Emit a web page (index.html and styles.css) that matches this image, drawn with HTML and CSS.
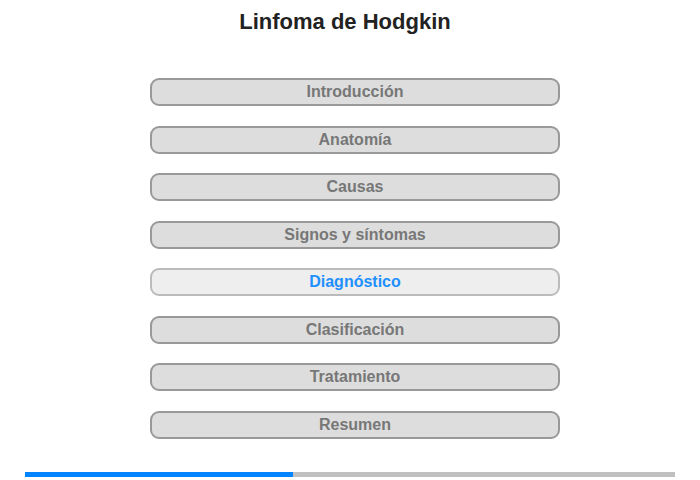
FILE: index.html
```html
<!DOCTYPE html>
<html lang="es">
<head>
<meta charset="utf-8">
<title>Linfoma de Hodgkin</title>
<link rel="stylesheet" href="styles.css">
</head>
<body>
<div class="page">
  <h1 class="title">Linfoma de Hodgkin</h1>
  <nav class="menu">
    <div class="item">Introducción</div>
    <div class="item">Anatomía</div>
    <div class="item">Causas</div>
    <div class="item">Signos y síntomas</div>
    <div class="item active">Diagnóstico</div>
    <div class="item">Clasificación</div>
    <div class="item">Tratamiento</div>
    <div class="item">Resumen</div>
  </nav>
  <div class="progress"><div class="progress-fill" style="width: 268px"></div></div>
</div>
</body>
</html>
```
FILE: styles.css
```css
html, body {
  margin: 0;
  padding: 0;
  background: #fff;
}
.page {
  width: 700px;
  height: 480px;
  display: flex;
  flex-direction: column;
  align-items: center;
  font-family: "Liberation Sans", Arial, sans-serif;
}
.title {
  margin: 10px 10px 0 0;
  font-size: 22px;
  line-height: 24px;
  font-weight: bold;
  color: #222;
}
.menu {
  margin: 44px 0 0 10px;
  display: flex;
  flex-direction: column;
  gap: 19.5px;
}
.item {
  box-sizing: border-box;
  width: 410px;
  height: 28px;
  border: 2px solid #999;
  border-radius: 9px;
  background: #dddddd;
  color: #777;
  font-size: 16px;
  font-weight: bold;
  line-height: 24px;
  text-align: center;
}
.item.active {
  background: #eeeeee;
  border-color: #bbb;
  color: #1e90ff;
}
.progress {
  margin-top: 33px;
  width: 650px;
  height: 5px;
  background: #c0c0c0;
  display: flex;
}
.progress-fill {
  height: 100%;
  background: #0084ff;
}
```
